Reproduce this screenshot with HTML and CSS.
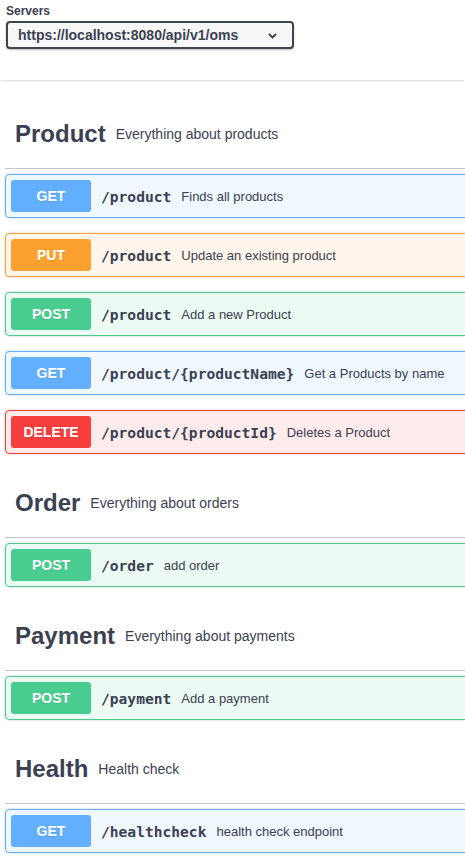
FILE: index.html
```html
<!DOCTYPE html>
<html>
<head>
<meta charset="utf-8">
<link rel="stylesheet" href="styles.css">
</head>
<body>
<div class="scheme">
  <span class="servers-title">Servers</span>
  <div class="select">
    <span class="select-text">https://localhost:8080/api/v1/oms</span>
    <svg class="chev" width="9" height="6" viewBox="0 0 9 6"><path d="M1 1 L4.5 4.5 L8 1" fill="none" stroke="#3b4151" stroke-width="1.8"/></svg>
  </div>
</div>

<div class="wrapper">
  <section class="tag-section">
    <h3 class="tag"><span>Product</span><small>Everything about products</small></h3>
    <div class="opblock get"><div class="summary"><span class="method">GET</span><span class="path">/product</span><span class="desc">Finds all products</span></div></div>
    <div class="opblock put"><div class="summary"><span class="method">PUT</span><span class="path">/product</span><span class="desc">Update an existing product</span></div></div>
    <div class="opblock post"><div class="summary"><span class="method">POST</span><span class="path">/product</span><span class="desc">Add a new Product</span></div></div>
    <div class="opblock get"><div class="summary"><span class="method">GET</span><span class="path">/product/{productName}</span><span class="desc">Get a Products by name</span></div></div>
    <div class="opblock delete"><div class="summary"><span class="method">DELETE</span><span class="path">/product/{productId}</span><span class="desc">Deletes a Product</span></div></div>
  </section>

  <section class="tag-section">
    <h3 class="tag"><span>Order</span><small>Everything about orders</small></h3>
    <div class="opblock post"><div class="summary"><span class="method">POST</span><span class="path">/order</span><span class="desc">add order</span></div></div>
  </section>

  <section class="tag-section">
    <h3 class="tag"><span>Payment</span><small>Everything about payments</small></h3>
    <div class="opblock post"><div class="summary"><span class="method">POST</span><span class="path">/payment</span><span class="desc">Add a payment</span></div></div>
  </section>

  <section class="tag-section">
    <h3 class="tag"><span>Health</span><small>Health check</small></h3>
    <div class="opblock get"><div class="summary"><span class="method">GET</span><span class="path">/healthcheck</span><span class="desc">health check endpoint</span></div></div>
  </section>
</div>
</body>
</html>
```
FILE: styles.css
```css
html, body {
  margin: 0;
  padding: 0;
  background: #fff;
  overflow: hidden;
}
body {
  font-family: "Liberation Sans", Arial, sans-serif;
  color: #3b4151;
  width: 465px;
}
.scheme {
  height: 80px;
  box-sizing: border-box;
  padding: 4px 0 0 6px;
  box-shadow: 0 1px 2px 0 rgba(0,0,0,.15);
  margin-bottom: 20px;
}
.servers-title {
  display: block;
  font-size: 12px;
  font-weight: 700;
  line-height: 14px;
  margin: 0 0 3px 0;
}
.select {
  width: 288px;
  height: 28px;
  box-sizing: border-box;
  border: 2px solid #41444e;
  border-radius: 4px;
  background: #f7f7f7;
  box-shadow: 0 1px 2px 0 rgba(0,0,0,.25);
  display: flex;
  align-items: center;
  padding: 0 15px 0 10px;
}
.select-text {
  font-size: 14px;
  font-weight: 700;
  flex: 1;
}
.chev { display: block; margin-top: 1px; }
.wrapper {
  padding-left: 5px;
  width: 700px;
}
.tag {
  display: flex;
  align-items: center;
  min-height: 48px;
  padding: 10px 20px 10px 10px;
  margin: 0 0 5px;
  border-bottom: 1px solid rgba(59,65,81,.3);
  font-size: 24px;
  font-weight: 700;
  line-height: 28px;
}
.tag small {
  font-size: 14px;
  font-weight: 400;
  padding: 0 10px;
  flex: 1;
}
.opblock {
  border: 1px solid;
  border-radius: 4px;
  margin: 0 0 15px;
  box-shadow: 0 0 3px rgba(0,0,0,.19);
}
.summary {
  display: flex;
  align-items: center;
  padding: 5px;
}
.method {
  min-width: 80px;
  padding: 6px 0;
  text-align: center;
  font-size: 14px;
  line-height: 20px;
  font-weight: 700;
  color: #fff;
  border-radius: 3px;
  text-shadow: 0 1px 0 rgba(0,0,0,.1);
}
.path {
  padding: 0 10px;
  font-family: "DejaVu Sans Mono", "Liberation Mono", monospace;
  font-size: 14.6px;
  font-weight: 700;
  color: #3b4151;
}
.desc {
  font-size: 13px;
  color: #3b4151;
}
.get { border-color: #61affe; background: rgba(97,175,254,.1); }
.get .method { background: #61affe; }
.put { border-color: #fca130; background: rgba(252,161,48,.1); }
.put .method { background: #fca130; }
.post { border-color: #49cc90; background: rgba(73,204,144,.1); }
.post .method { background: #49cc90; }
.delete { border-color: #f93e3e; background: rgba(249,62,62,.1); }
.delete .method { background: #f93e3e; }
```
